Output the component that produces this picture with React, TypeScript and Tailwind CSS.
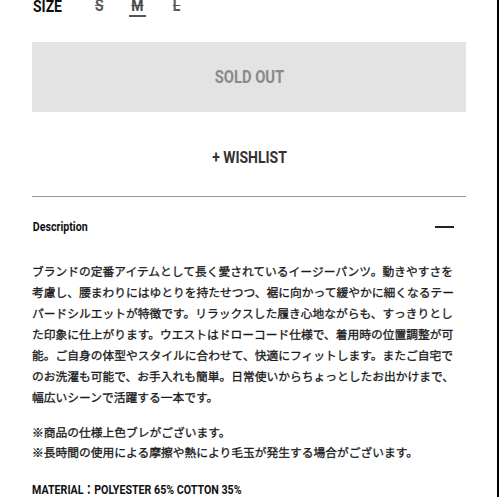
import React from "react";

const cond = "inline-block scale-x-[0.82] whitespace-nowrap font-['Roboto',sans-serif] font-bold";

export default function App() {
  const lines = [
    "ブランドの定番アイテムとして長く愛されているイージーパンツ。動きやすさを",
    "考慮し、腰まわりにはゆとりを持たせつつ、裾に向かって緩やかに細くなるテー",
    "パードシルエットが特徴です。リラックスした履き心地ながらも、すっきりとし",
    "た印象に仕上がります。ウエストはドローコード仕様で、着用時の位置調整が可",
    "能。ご自身の体型やスタイルに合わせて、快適にフィットします。またご自宅で",
    "のお洗濯も可能で、お手入れも簡単。日常使いからちょっとしたお出かけまで、",
    "幅広いシーンで活躍する一本です。",
  ];
  return (
    <div className="w-[500px] h-[500px] bg-white overflow-hidden">
      <div className="w-[499px] h-[500px] border-r-2 border-black pl-[32px] pr-[31px]">
        {/* size row */}
        <div className="flex items-start h-[17px] mt-[-3px] text-[17px] leading-[17px]">
          <div className="w-[48px] pl-px">
            <span className={cond + " origin-left text-[#111]"}>SIZE</span>
          </div>
          <div className="w-[38.5px] flex justify-center">
            <span className={cond + " origin-center text-[#5a5a5a] line-through decoration-[#5a5a5a]"}>S</span>
          </div>
          <div className="w-[38.5px] flex flex-col items-center">
            <span className={cond + " origin-center text-[#4a4a4a] line-through decoration-[#4a4a4a]"}>M</span>
            <div className="w-[17px] h-[1.5px] mt-px bg-[#555]" />
          </div>
          <div className="w-[38.5px] flex justify-center">
            <span className={cond + " origin-center text-[#5a5a5a] line-through decoration-[#5a5a5a]"}>L</span>
          </div>
        </div>

        {/* sold out */}
        <div className="mt-[28px] h-[70px] bg-[#e3e3e3] flex items-center justify-center">
          <span className={cond + " origin-center text-[18px] leading-[18px] text-[#8a8a8a]"}>SOLD OUT</span>
        </div>

        {/* wishlist */}
        <div className="pt-[37px] pb-[31px] flex justify-center">
          <span className={cond + " origin-center text-[17px] leading-[16px] text-[#333]"}>+ WISHLIST</span>
        </div>

        <div className="h-px bg-[#9a9a9a]" />

        {/* description header */}
        <div className="mt-[23px] flex items-center justify-between h-[13px]">
          <span className={cond + " origin-left text-[13px] leading-[13px] text-[#111] pl-px"}>Description</span>
          <div className="w-[19px] h-[2px] bg-[#222] mr-[12px]" />
        </div>

        {/* body */}
        <div className="mt-[27px] font-['Noto_Sans_CJK_JP',sans-serif] text-[11.75px] leading-[21px] text-[#1a1a1a] [-webkit-text-stroke:0.3px_#1a1a1a]">
          {lines.map((l, i) => (
            <div key={i} className="whitespace-nowrap">{l}</div>
          ))}
        </div>

        <div className="mt-[15px] font-['Noto_Sans_CJK_JP',sans-serif] text-[11.75px] leading-[20px] text-[#1a1a1a] [-webkit-text-stroke:0.3px_#1a1a1a]">
          <div className="whitespace-nowrap">※商品の仕様上色ブレがございます。</div>
          <div className="whitespace-nowrap">※長時間の使用による摩擦や熱により毛玉が発生する場合がございます。</div>
        </div>

        <div className="mt-[20px] h-[13px] text-[13px] leading-[13px] text-[#111]">
          <span className={cond + " origin-left"}>
            MATERIAL<span className="font-['Noto_Sans_CJK_JP',sans-serif]">：</span>POLYESTER 65% COTTON 35%
          </span>
        </div>
      </div>
    </div>
  );
}
